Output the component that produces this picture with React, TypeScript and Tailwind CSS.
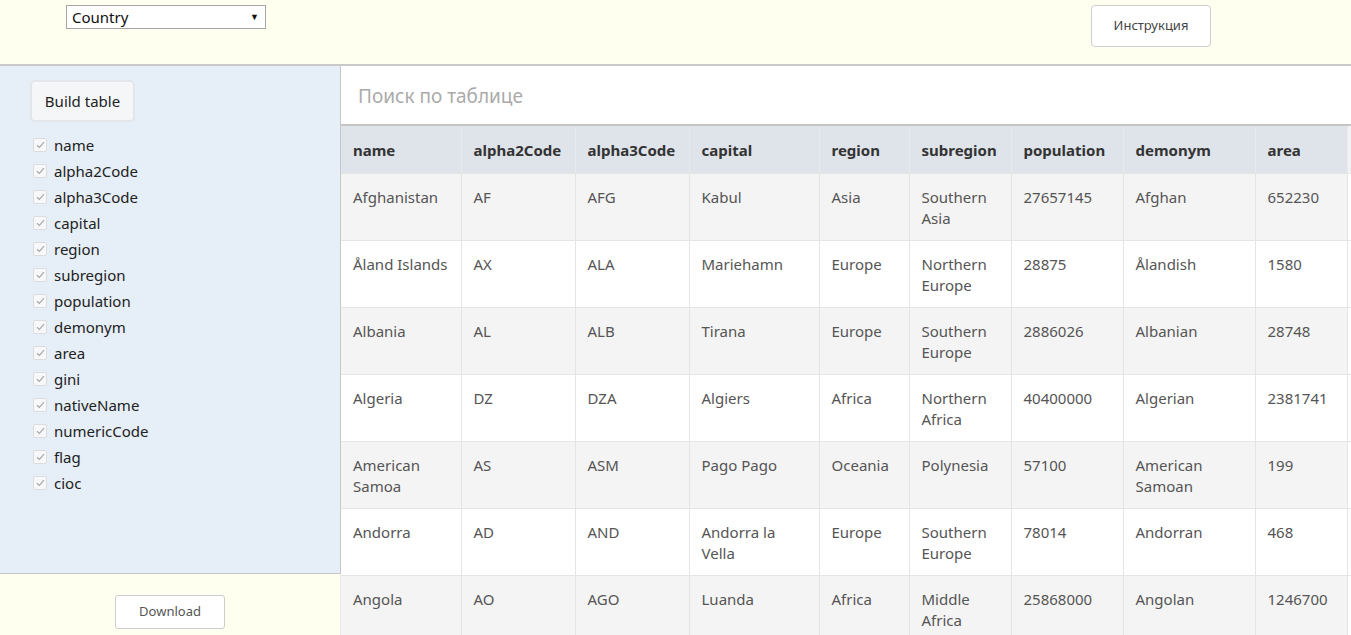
import React from 'react';

const FIELDS = ['name', 'alpha2Code', 'alpha3Code', 'capital', 'region', 'subregion', 'population', 'demonym', 'area', 'gini', 'nativeName', 'numericCode', 'flag', 'cioc'];

const COLS: { key: string; w: string }[] = [
  { key: 'name', w: 'w-[120px]' },
  { key: 'alpha2Code', w: 'w-[114px]' },
  { key: 'alpha3Code', w: 'w-[114px]' },
  { key: 'capital', w: 'w-[130px]' },
  { key: 'region', w: 'w-[90px]' },
  { key: 'subregion', w: 'w-[102px]' },
  { key: 'population', w: 'w-[112px]' },
  { key: 'demonym', w: 'w-[132px]' },
  { key: 'area', w: 'w-[92px]' },
];

const ROWS = [
  ['Afghanistan', 'AF', 'AFG', 'Kabul', 'Asia', 'Southern Asia', '27657145', 'Afghan', '652230'],
  ['Åland Islands', 'AX', 'ALA', 'Mariehamn', 'Europe', 'Northern Europe', '28875', 'Ålandish', '1580'],
  ['Albania', 'AL', 'ALB', 'Tirana', 'Europe', 'Southern Europe', '2886026', 'Albanian', '28748'],
  ['Algeria', 'DZ', 'DZA', 'Algiers', 'Africa', 'Northern Africa', '40400000', 'Algerian', '2381741'],
  ['American Samoa', 'AS', 'ASM', 'Pago Pago', 'Oceania', 'Polynesia', '57100', 'American Samoan', '199'],
  ['Andorra', 'AD', 'AND', 'Andorra la Vella', 'Europe', 'Southern Europe', '78014', 'Andorran', '468'],
  ['Angola', 'AO', 'AGO', 'Luanda', 'Africa', 'Middle Africa', '25868000', 'Angolan', '1246700'],
];

const Check = () => (
  <span className="w-[14px] h-[14px] border border-[#dcdcdc] bg-[#f7f8fa] rounded-[2px] flex items-center justify-center shrink-0">
    <svg width="9" height="8" viewBox="0 0 9 8" fill="none">
      <path d="M1 4.2 L3.4 6.5 L8 1.2" stroke="#a8a8a8" strokeWidth="1.2" />
    </svg>
  </span>
);

export default function App() {
  return (
    <div className="w-[1351px] h-[635px] overflow-hidden bg-[#fffff0] text-[#333] font-['Noto_Sans','Open_Sans',sans-serif]">
      {/* top bar */}
      <div className="h-[66px] border-b-2 border-[#c9c9c9] flex items-start">
        <div className="ml-[66px] mt-[5px] w-[200px] h-[24px] border border-[#a6a6a6] bg-white flex items-center justify-between pl-[5px] pr-[6px] text-[15px] text-[#111]">
          <span>Country</span>
          <span className="text-[9px]">▼</span>
        </div>
        <button className="ml-[825px] mt-[5px] w-[120px] h-[42px] border border-[#cfcfcf] rounded bg-white text-[13px] text-[#444]">
          Инструкция
        </button>
      </div>

      <div className="flex">
        {/* sidebar */}
        <div className="w-[341px] shrink-0 flex flex-col">
          <div className="h-[508px] bg-[#e6eef7] border-r border-b border-[#c7c7c7] pl-[30px] pt-[14px]">
            <button className="w-[105px] h-[42px] rounded-[5px] border-2 border-[#e2e6eb] bg-[#f5f6f8] text-[15px] text-[#222]">
              Build table
            </button>
            <div className="mt-[10px] pl-[3px] flex flex-col">
              {FIELDS.map((f) => (
                <label key={f} className="h-[26px] flex items-center gap-[7px] text-[15px] text-[#222]">
                  <Check />
                  <span>{f}</span>
                </label>
              ))}
            </div>
          </div>
          <div className="border-r border-[#ececec] flex justify-center pt-[21px] h-[80px]">
            <button className="w-[110px] h-[34px] border border-[#cccccc] rounded-[3px] bg-white text-[13px] text-[#555]">
              Download
            </button>
          </div>
        </div>

        {/* main */}
        <div className="flex-1 flex flex-col bg-white">
          <div className="h-[60px] border-b-2 border-[#c4c4c4] flex items-center pl-[17px] pt-[3px] text-[19px] text-[#aaa]">
            Поиск по таблице
          </div>
          <table className="table-fixed border-collapse text-[15px] text-[#555] w-[1010px]">
            <thead>
              <tr className="bg-[#dfe3ea] h-[47px]">
                {COLS.map((c) => (
                  <th key={c.key} className={`${c.w} text-left font-bold text-[#333] px-[12px] pt-[2px] border-r border-[#e6e9ee]`}>
                    {c.key}
                  </th>
                ))}
                <th className="w-[4px] bg-[#f2f2f2]" />
              </tr>
            </thead>
            <tbody>
              {ROWS.map((r, i) => (
                <tr key={r[0]} className={`h-[67px] border-t border-[#e5e5e5] ${i % 2 === 0 ? 'bg-[#f4f4f4]' : 'bg-white'}`}>
                  {r.map((v, j) => (
                    <td key={j} className="align-top px-[12px] pt-[13px] pb-[11px] leading-[21px] border-r border-[#e5e5e5]">
                      {v}
                    </td>
                  ))}
                  <td className="bg-white" />
                </tr>
              ))}
            </tbody>
          </table>
        </div>
      </div>
    </div>
  );
}
